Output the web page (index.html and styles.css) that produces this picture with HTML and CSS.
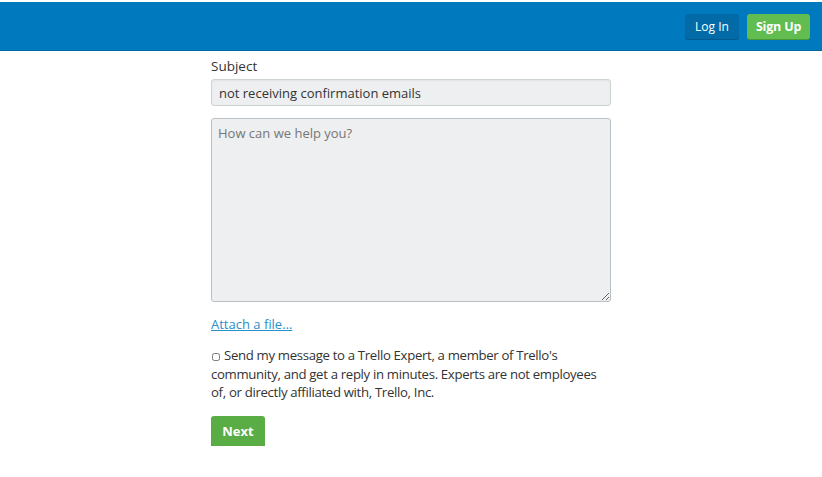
FILE: index.html
```html
<!DOCTYPE html>
<html>
<head>
<meta charset="utf-8">
<link rel="stylesheet" href="styles.css">
</head>
<body>
<header class="topbar">
  <a class="btn btn-login" href="#">Log In</a>
  <a class="btn btn-signup" href="#">Sign Up</a>
</header>
<main class="form">
  <label class="label" for="subject">Subject</label>
  <input class="field" id="subject" type="text" value="not receiving confirmation emails">
  <textarea class="area" placeholder="How can we help you?"></textarea>
  <a class="attach" href="#">Attach a file…</a>
  <div class="expert"><input class="check" type="checkbox"><span>Send my message to a Trello Expert, a member of Trello's community, and get a reply in minutes. Experts are not employees of, or directly affiliated with, Trello, Inc.</span></div>
  <button class="next">Next</button>
</main>
</body>
</html>
```
FILE: styles.css
```css
html, body {
  margin: 0;
  padding: 0;
  background: #fff;
}
body {
  padding-top: 2px;
  font-family: "Open Sans", "Noto Sans", sans-serif;
  color: #333;
}
.topbar {
  height: 48px;
  background: #0079bf;
  border-bottom: 1px solid #0067a3;
  display: flex;
  align-items: center;
  justify-content: flex-end;
  gap: 8px;
  padding-right: 12px;
}
.btn {
  display: flex;
  align-items: center;
  justify-content: center;
  height: 25px;
  border-radius: 3px;
  color: #fff;
  text-decoration: none;
  font-size: 12px;
}
.btn-login {
  width: 54px;
  background: #026aa7;
  box-shadow: 0 1px 0 #015a8f;
}
.btn-signup {
  width: 63px;
  background: #61bd4f;
  font-weight: bold;
  font-size: 12.5px;
  letter-spacing: -0.2px;
  box-shadow: 0 1px 0 #4a9a3a;
}
.form {
  width: 400px;
  margin: 0 auto;
  padding-top: 6px;
  display: flex;
  flex-direction: column;
  align-items: flex-start;
}
.label {
  font-size: 13.5px;
  line-height: 19px;
  color: #333;
  margin-bottom: 3px;
}
.field, .area {
  width: 400px;
  box-sizing: border-box;
  background: #edeff0;
  border: 1px solid #cdd2d4;
  border-radius: 3px;
  font-family: inherit;
  font-size: 13px;
  color: #333;
  padding: 0 7px;
  margin: 0;
}
.field {
  height: 27px;
  box-shadow: inset 0 1px 2px rgba(0,0,0,0.05);
}
.area {
  height: 184px;
  margin-top: 12px;
  padding: 5px 6px;
  border-color: #b9bfc2;
  resize: vertical;
  line-height: 19px;
}
.area::placeholder {
  color: #777;
}
.attach {
  margin-top: 13px;
  font-size: 13px;
  line-height: 19px;
  color: #298fca;
  text-decoration: underline;
}
.expert {
  margin-top: 12px;
  font-size: 13.2px;
  letter-spacing: -0.33px;
  line-height: 18.5px;
  color: #333;
  width: 400px;
}
.check {
  width: 8px;
  height: 8px;
  margin: 0 4px 0 1px;
  vertical-align: -1px;
}
.next {
  margin-top: 14px;
  width: 54px;
  height: 30px;
  border: 0;
  border-radius: 3px;
  background: #5aac44;
  box-shadow: 0 1px 0 #3f8a2f;
  color: #fff;
  font-family: inherit;
  font-weight: bold;
  font-size: 13px;
}
```
